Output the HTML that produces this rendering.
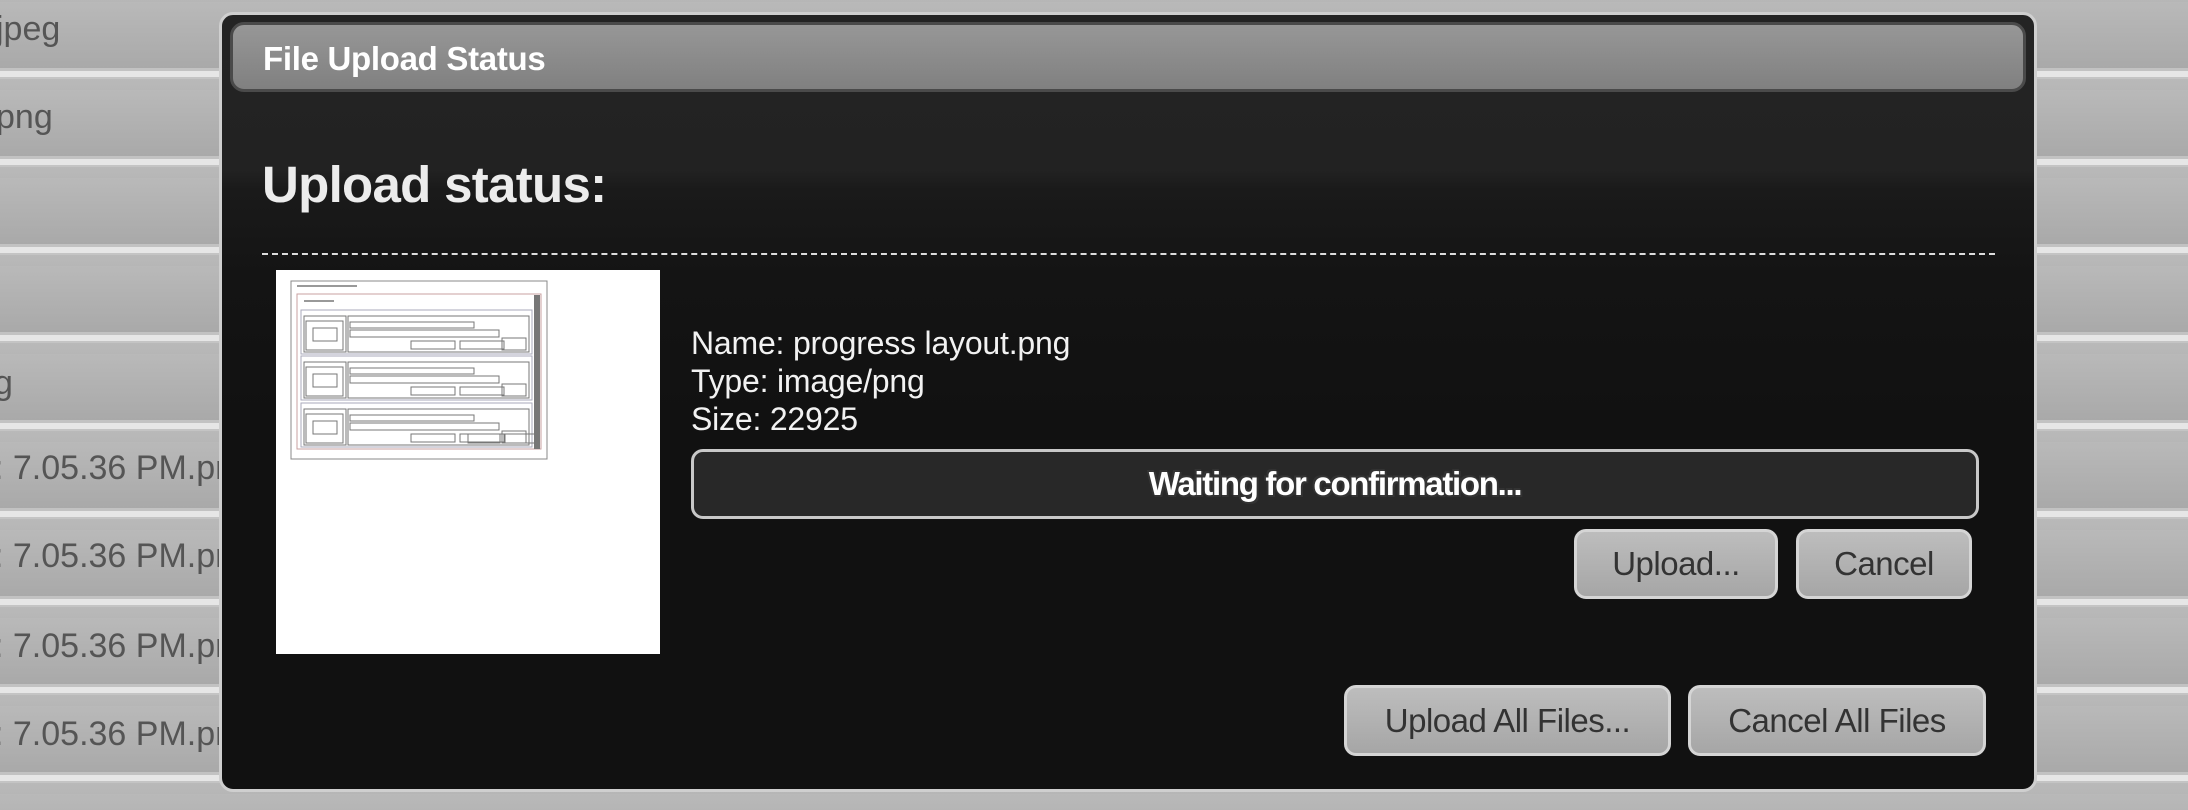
<!DOCTYPE html>
<html><head><meta charset="utf-8"><style>
html,body{margin:0;padding:0;width:2188px;height:810px;overflow:hidden;background:#b0b0b0;font-family:"Liberation Sans",Arial,sans-serif;}
.bg{position:absolute;left:0;top:0;width:2188px;height:810px;
background:repeating-linear-gradient(180deg,#b9b9b9 0px,#a9a9a9 66px,#c2c2c2 66px,#c2c2c2 69px,#e6e6e6 69px,#e6e6e6 75px,#c4c4c4 75px,#c4c4c4 77px,#b9b9b9 77px,#b9b9b9 77px);
background-size:100% 88px;background-position:0 2px;}
.lt{position:absolute;font-size:34px;color:#555;white-space:nowrap;}
.dlg{position:absolute;left:219px;top:12px;width:1812px;height:774px;border:3px solid #cfcfcf;border-radius:14px;
background:linear-gradient(180deg,#242424 0px,#222 155px,#1a1a1a 175px,#141414 260px,#111 400px);}
.title{position:absolute;left:8px;top:7px;width:1796px;height:70px;border:3px solid #4a4a4a;border-radius:14px;
background:linear-gradient(180deg,#979797,#808080);box-sizing:border-box;}
.title span{position:absolute;left:30px;top:15px;font-size:33px;font-weight:bold;color:#fff;letter-spacing:-0.3px;}
h1{position:absolute;left:40px;top:140px;margin:0;font-size:51px;font-weight:bold;color:#ececec;letter-spacing:-0.7px;}
.dash{position:absolute;left:40px;top:238px;width:1733px;border-top:2px dashed #ddd;}
.img{position:absolute;left:54px;top:255px;width:384px;height:384px;background:#fff;}
.info{position:absolute;left:469px;top:309px;font-size:32px;line-height:38px;color:#f2f2f2;letter-spacing:-0.2px;}
.bar{position:absolute;left:469px;top:434px;width:1288px;height:70px;box-sizing:border-box;border:3px solid #c8c8c8;border-radius:12px;background:#282828;}
.bar span{position:absolute;left:0;right:0;top:13px;text-align:center;font-size:33px;font-weight:bold;color:#fff;letter-spacing:-1.3px;
text-shadow:-2px 0 #333,2px 0 #333,0 2px #333,0 -2px #333,2px 2px #333,-2px -2px #333;}
.btn{position:absolute;box-sizing:border-box;border:3px solid #d5d5d5;border-radius:12px;background:linear-gradient(180deg,#bdbdbd,#a6a6a6);
color:#333;font-size:33px;text-align:center;letter-spacing:-0.5px;}
</style></head><body>
<div class="bg"></div>
<div class="lt" style="left:-4px;top:10px">jpeg</div>
<div class="lt" style="left:-4px;top:98px">png</div>
<div class="lt" style="left:-6px;top:364px">g</div>
<div class="lt" style="left:-6px;top:449px">: 7.05.36 PM.png</div>
<div class="lt" style="left:-6px;top:537px">: 7.05.36 PM.png</div>
<div class="lt" style="left:-6px;top:627px">: 7.05.36 PM.png</div>
<div class="lt" style="left:-6px;top:715px">: 7.05.36 PM.png</div>
<div class="dlg">
 <div class="title"><span>File Upload Status</span></div>
 <h1>Upload status:</h1>
 <div class="dash"></div>
 <div class="img">
  <svg width="384" height="384" viewBox="0 0 384 384" style="position:absolute;left:0;top:0">
   <g fill="none" stroke="#777" stroke-width="1">
    <rect x="15" y="11" width="256" height="178" stroke="#888"/>
    <rect x="21" y="24" width="244" height="155" stroke="#c9a0a0"/>
    <rect x="258" y="25" width="6" height="154" fill="#777" stroke="none"/>
    <rect x="25" y="40" width="231" height="44" stroke="#aab"/>
    <rect x="25" y="86" width="231" height="44" stroke="#aab"/>
    <rect x="25" y="133" width="231" height="44" stroke="#aab"/>
    <g id="r">
     <rect x="28" y="46" width="42" height="36"/>
     <rect x="30" y="51" width="37" height="29"/>
     <rect x="37" y="58" width="24" height="13"/>
     <rect x="72" y="46" width="181" height="36"/>
     <rect x="74" y="52" width="124" height="6"/>
     <rect x="74" y="60" width="149" height="7"/>
     <rect x="135" y="71" width="44" height="8"/>
     <rect x="184" y="71" width="44" height="8"/>
     <rect x="226" y="68" width="24" height="12"/>
    </g>
    <use href="#r" y="46"/>
    <use href="#r" y="93"/>
    <rect x="192" y="164" width="32" height="9"/>
    <rect x="229" y="164" width="32" height="9"/>
   </g>
   <g fill="#999"><rect x="21" y="15" width="60" height="2"/><rect x="28" y="30" width="30" height="2"/></g>
  </svg>
 </div>
 <div class="info">Name: progress layout.png<br>Type: image/png<br>Size: 22925</div>
 <div class="bar"><span>Waiting for confirmation...</span></div>
 <div class="btn" style="left:1352px;top:514px;width:204px;height:70px;line-height:64px">Upload...</div>
 <div class="btn" style="left:1574px;top:514px;width:176px;height:70px;line-height:64px">Cancel</div>
 <div class="btn" style="left:1122px;top:670px;width:327px;height:71px;line-height:65px">Upload All Files...</div>
 <div class="btn" style="left:1466px;top:670px;width:298px;height:71px;line-height:65px">Cancel All Files</div>
</div>
</body></html>
